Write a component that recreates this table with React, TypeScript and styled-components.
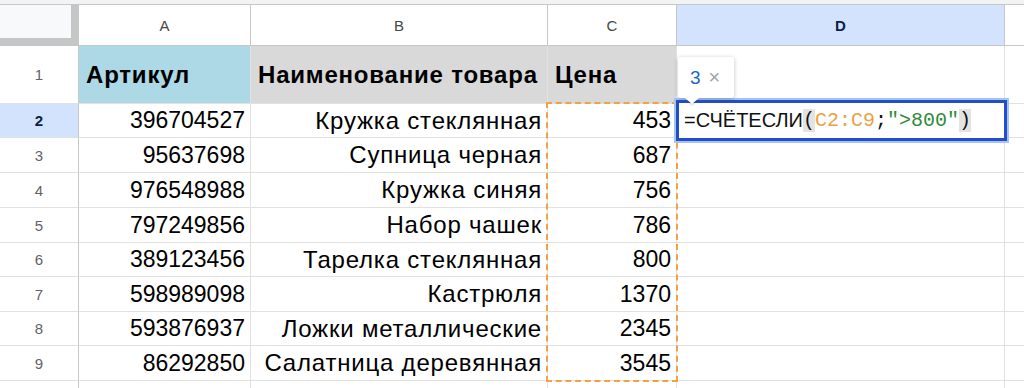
import React from "react";
import styled, { createGlobalStyle, css } from "styled-components";

const GlobalStyle = createGlobalStyle`
  html, body {
    margin: 0;
    padding: 0;
    background: #ffffff;
  }
  body {
    font-family: "Liberation Sans", Arial, sans-serif;
    overflow: hidden;
  }
`;

// колонка E видна только краем, буква за пределами экрана
const COLS = ["A", "B", "C", "D", ""];

const rows = [
  { id: "396704527", name: "Кружка стеклянная", price: "453" },
  { id: "95637698", name: "Супница черная", price: "687" },
  { id: "976548988", name: "Кружка синяя", price: "756" },
  { id: "797249856", name: "Набор чашек", price: "786" },
  { id: "389123456", name: "Тарелка стеклянная", price: "800" },
  { id: "598989098", name: "Кастрюля", price: "1370" },
  { id: "593876937", name: "Ложки металлические", price: "2345" },
  { id: "86292850", name: "Салатница деревянная", price: "3545" },
];

export default function App() {
  return (
    <>
      <GlobalStyle />
      <TopStrip />
      <Sheet>
        <Corner />
        {COLS.map((c, i) => (
          <ColHeader key={i} $active={c === "D"}>
            {c}
          </ColHeader>
        ))}

        <RowHeader>1</RowHeader>
        <Cell $bold $text $fill="#add8e6">
          Артикул
        </Cell>
        <Cell $bold $text $fill="#d9d9d9">
          Наименование товара
        </Cell>
        <Cell $bold $text $fill="#d9d9d9">
          Цена
        </Cell>
        <Cell />
        <Cell />

        {rows.map((r, i) => (
          <React.Fragment key={r.id}>
            <RowHeader $active={i === 0}>{i + 2}</RowHeader>
            <Cell $right>{r.id}</Cell>
            <Cell $right $text>
              {r.name}
            </Cell>
            <Cell $right>{r.price}</Cell>
            <Cell />
            <Cell />
          </React.Fragment>
        ))}

        <RowHeader />
        <Cell />
        <Cell />
        <Cell />
        <Cell />
        <Cell />

        {/* скопированный диапазон C2:C9 */}
        <CopyRange />

        {/* подсказка с результатом */}
        <ResultTip>
          <TipValue>3</TipValue>
          <TipClose>×</TipClose>
        </ResultTip>

        {/* редактор формулы в D2 */}
        <Editor>
          <span>=СЧЁТЕСЛИ</span>
          <Paren>(</Paren>
          <Mono $color="#eba23f">C2:C9</Mono>
          <Mono>;</Mono>
          <Mono $color="#2e8b3a">"&gt;800"</Mono>
          <Paren>)</Paren>
        </Editor>
      </Sheet>
    </>
  );
}

const TopStrip = styled.div`
  height: 4px;
  background: #f1f3f4;
  border-bottom: 1px solid #c7c7c7;
`;

const Sheet = styled.div`
  position: relative;
  display: grid;
  grid-template-columns: 79px 172px 297px 129px 328px 120px;
  grid-template-rows: 41px 58px 34px 35px 35px 35px 34px 35px 34px 35px 30px;
  height: 383px;
  overflow: hidden;
`;

const Corner = styled.div`
  box-sizing: border-box;
  background: #f8f9fa;
  border-right: 8px solid #c4c7c5;
  border-bottom: 8px solid #c4c7c5;
`;

const activeHeader = css`
  background: #d3e3fd;
  color: #0b1f44;
  font-weight: 700;
`;

const ColHeader = styled.div<{ $active?: boolean }>`
  box-sizing: border-box;
  display: flex;
  align-items: center;
  justify-content: center;
  background: #ffffff;
  border-right: 1px solid #c7c7c7;
  border-bottom: 1px solid #c7c7c7;
  font-size: 15px;
  color: #444746;
  ${(p) => p.$active && activeHeader}
`;

const RowHeader = styled.div<{ $active?: boolean }>`
  box-sizing: border-box;
  display: flex;
  align-items: center;
  justify-content: center;
  background: #ffffff;
  border-right: 1px solid #c7c7c7;
  border-bottom: 1px solid #e1e1e1;
  font-size: 15px;
  color: #5f6368;
  ${(p) => p.$active && activeHeader}
`;

const Cell = styled.div<{
  $right?: boolean;
  $bold?: boolean;
  $text?: boolean;
  $fill?: string;
}>`
  box-sizing: border-box;
  display: flex;
  align-items: center;
  justify-content: ${(p) => (p.$right ? "flex-end" : "flex-start")};
  padding: 0 5px 0 7px;
  background: ${(p) => p.$fill || "#ffffff"};
  border-right: 1px solid #e1e1e1;
  border-bottom: 1px solid #e1e1e1;
  font-size: ${(p) => (p.$text ? "24px" : "23px")};
  letter-spacing: ${(p) => (p.$text ? "0.8px" : "0")};
  font-weight: ${(p) => (p.$bold ? 700 : 400)};
  color: #000000;
  white-space: nowrap;
  overflow: hidden;
`;

const CopyRange = styled.div`
  position: absolute;
  grid-row: 3 / 11;
  grid-column: 4 / 5;
  top: -2px;
  left: -2px;
  right: -1px;
  bottom: -1px;
  border: 2px dashed #f1a242;
  pointer-events: none;
`;

const Editor = styled.div`
  position: absolute;
  grid-row: 3 / 4;
  grid-column: 5 / 6;
  top: -4px;
  left: -1px;
  right: -2px;
  bottom: -3px;
  display: flex;
  align-items: center;
  padding-left: 5px;
  border: 3px solid #1f4fc9;
  box-shadow: 0 0 0 2px #a8c2f3;
  background: #ffffff;
  font-size: 20px;
  color: #111111;
  white-space: nowrap;
`;

const Paren = styled.span`
  background: #e3e3e3;
  font-family: "Liberation Mono", monospace;
  font-size: 20px;
`;

const Mono = styled.span<{ $color?: string }>`
  font-family: "Liberation Mono", monospace;
  font-size: 20px;
  color: ${(p) => p.$color || "#111111"};
`;

const ResultTip = styled.div`
  position: absolute;
  grid-row: 2 / 3;
  grid-column: 5 / 6;
  left: 1px;
  bottom: 6px;
  width: 56px;
  height: 41px;
  display: flex;
  align-items: center;
  gap: 8px;
  padding-left: 12px;
  box-sizing: border-box;
  background: #ffffff;
  border-radius: 3px;
  box-shadow: 0 1px 4px rgba(60, 64, 67, 0.35);
  z-index: 2;

  &::after {
    content: "";
    position: absolute;
    left: 7px;
    bottom: -6px;
    width: 0;
    height: 0;
    border-left: 7px solid transparent;
    border-right: 7px solid transparent;
    border-top: 6px solid #ffffff;
    filter: drop-shadow(0 1px 1px rgba(60, 64, 67, 0.3));
  }
`;

const TipValue = styled.span`
  font-size: 19px;
  color: #1a64d6;
`;

const TipClose = styled.span`
  font-size: 20px;
  color: #a0a4a8;
`;
